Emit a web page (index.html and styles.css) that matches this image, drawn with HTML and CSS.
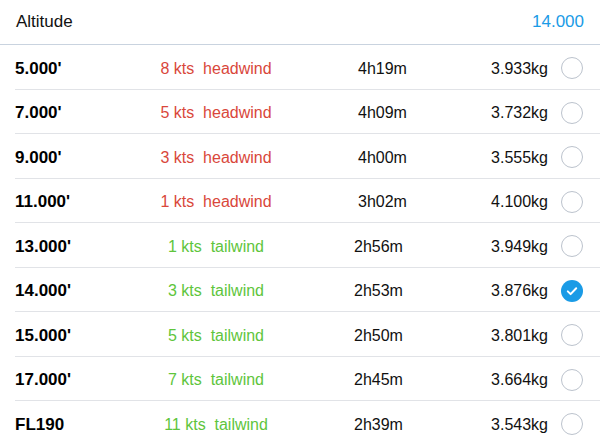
FILE: index.html
```html
<!DOCTYPE html>
<html>
<head>
<meta charset="utf-8">
<link rel="stylesheet" href="styles.css">
</head>
<body>
<div class="header">
  <span class="header-title">Altitude</span>
  <span class="header-value">14.000</span>
</div>
<ul class="list">
  <li class="row head"><span class="alt">5.000'</span><span class="wind">8 kts&nbsp; headwind</span><span class="time">4h19m</span><span class="kg">3.933kg</span><span class="radio"></span></li>
  <li class="row head"><span class="alt">7.000'</span><span class="wind">5 kts&nbsp; headwind</span><span class="time">4h09m</span><span class="kg">3.732kg</span><span class="radio"></span></li>
  <li class="row head"><span class="alt">9.000'</span><span class="wind">3 kts&nbsp; headwind</span><span class="time">4h00m</span><span class="kg">3.555kg</span><span class="radio"></span></li>
  <li class="row head"><span class="alt">11.000'</span><span class="wind">1 kts&nbsp; headwind</span><span class="time">3h02m</span><span class="kg">4.100kg</span><span class="radio"></span></li>
  <li class="row tail"><span class="alt">13.000'</span><span class="wind">1 kts&nbsp; tailwind</span><span class="time">2h56m</span><span class="kg">3.949kg</span><span class="radio"></span></li>
  <li class="row tail"><span class="alt">14.000'</span><span class="wind">3 kts&nbsp; tailwind</span><span class="time">2h53m</span><span class="kg">3.876kg</span><span class="radio checked"><svg viewBox="0 0 22 22" width="22" height="22"><circle cx="11" cy="11" r="11" fill="#1a9be6"/><path d="M6.8 11.4 L9.6 14.1 L15.2 8.2" fill="none" stroke="#fff" stroke-width="2" stroke-linecap="round" stroke-linejoin="round"/></svg></span></li>
  <li class="row tail"><span class="alt">15.000'</span><span class="wind">5 kts&nbsp; tailwind</span><span class="time">2h50m</span><span class="kg">3.801kg</span><span class="radio"></span></li>
  <li class="row tail"><span class="alt">17.000'</span><span class="wind">7 kts&nbsp; tailwind</span><span class="time">2h45m</span><span class="kg">3.664kg</span><span class="radio"></span></li>
  <li class="row tail"><span class="alt">FL190</span><span class="wind">11 kts&nbsp; tailwind</span><span class="time">2h39m</span><span class="kg">3.543kg</span><span class="radio"></span></li>
</ul>
</body>
</html>
```
FILE: styles.css
```css
html, body {
  margin: 0;
  padding: 0;
  background: #fff;
}
body {
  font-family: "Liberation Sans", Arial, sans-serif;
  color: #111;
  width: 600px;
  height: 440px;
  overflow: hidden;
}
.header {
  height: 44px;
  border-bottom: 1px solid #c9d3df;
  display: flex;
  align-items: center;
  justify-content: space-between;
  padding: 0 16px;
  box-sizing: content-box;
  font-size: 17px;
}
.header-title {
  color: #111;
}
.header-value {
  color: #1a9be6;
}
.list {
  list-style: none;
  margin: 0;
  padding: 0;
}
.row {
  margin-left: 15px;
  height: 44.5px;
  box-sizing: border-box;
  border-bottom: 1px solid #e1e3e7;
  padding: 3px 17px 0 0;
  display: grid;
  grid-template-columns: 121px 160px 1fr auto 22px;
  align-items: center;
  font-size: 16px;
}
.row > span:not(.radio) {
  padding-top: 1px;
}
.alt {
  font-weight: bold;
  font-size: 17px;
  color: #000;
}
.wind {
  text-align: center;
  white-space: nowrap;
}
.head .wind {
  color: #d9473b;
}
.tail .wind {
  color: #5ec53c;
}
.time {
  padding-left: 58px;
}
.head .time {
  padding-left: 62px;
}
.kg {
  text-align: right;
  margin-right: 13px;
}
.radio {
  width: 22px;
  height: 22px;
  box-sizing: border-box;
  border: 1px solid #bcc3cd;
  border-radius: 50%;
  display: block;
}
.radio.checked {
  border: none;
}
.radio svg {
  display: block;
}
```
